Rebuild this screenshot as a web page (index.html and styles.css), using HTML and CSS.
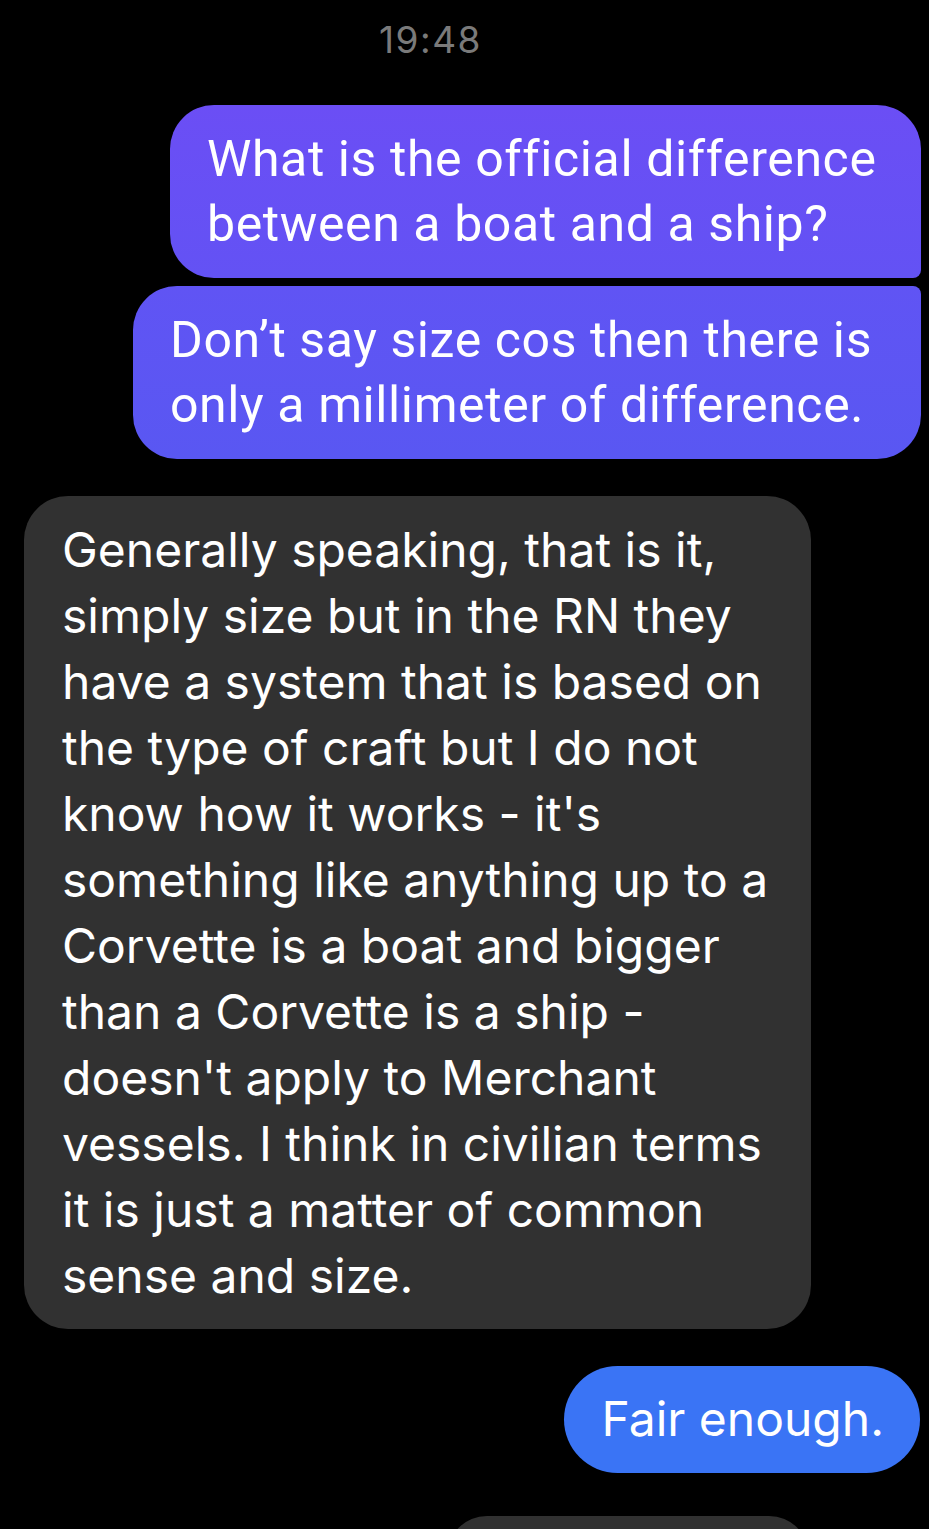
FILE: index.html
```html
<!DOCTYPE html>
<html lang="en">
<head>
    <meta charset="UTF-8">
    <meta name="viewport" content="width=device-width, initial-scale=1.0">
    <title>Messages</title>
    <link rel="stylesheet" href="styles.css">
</head>
<body>

<div class="thread">
    <div class="timestamp">19:48</div>

    <div class="bubble sent purple first">What is the official difference between a boat and a ship?</div>
    <div class="bubble sent purple last">Don’t say size cos then there is only a millimeter of difference.</div>

    <div class="bubble received">Generally speaking, that is it, simply size but in the RN they have a system that is based on the type of craft but I do not know how it works - it's something like anything up to a Corvette is a boat and bigger than a Corvette is a ship - doesn't apply to Merchant vessels. I think in civilian terms it is just a matter of common sense and size.</div>

    <div class="bubble sent blue">Fair enough.</div>

    <div class="bubble received peek"></div>
</div>

</body>
</html>
```

FILE: styles.css
```css
body {
    margin: 0;
    padding: 0;
    background: #000;
    color: #fff;
    font-family: Inter, "Noto Sans", sans-serif;
    height: 1529px;
    overflow: hidden;
}

.thread {
    display: flex;
    flex-direction: column;
    padding: 0 8px 0 24px;
}

.timestamp {
    align-self: center;
    margin: 18px 84px 43px 0;
    font-size: 37px;
    line-height: 44px;
    color: #7a7a7a;
    letter-spacing: 1.5px;
}

.bubble {
    box-sizing: border-box;
    font-size: 48px;
    line-height: 66px;
    border-radius: 44px;
}

.sent {
    align-self: flex-end;
}

.purple {
    font-family: Roboto, sans-serif;
    font-size: 50px;
    line-height: 65px;
    letter-spacing: 0.6px;
    padding: 22px 37px 21px 37px;
}

.purple.first {
    background: linear-gradient(#6b4ef5, #6352f4);
    border-bottom-right-radius: 8px;
    width: 751px;
}

.purple.last {
    margin-top: 8px;
    background: linear-gradient(#6054f4, #5957f2);
    border-top-right-radius: 8px;
    width: 788px;
}

.received {
    align-self: flex-start;
    background: #313131;
    width: 787px;
    margin-top: 37px;
    padding: 21px 30px 20px 38px;
}

.blue {
    margin-top: 37px;
    margin-right: 1px;
    background: #3a74f5;
    padding: 20px 36px 21px 38px;
    border-radius: 54px;
}

.peek {
    margin-left: 423px;
    width: 362px;
    height: 80px;
    padding: 0;
    margin-top: 43px;
}
```
